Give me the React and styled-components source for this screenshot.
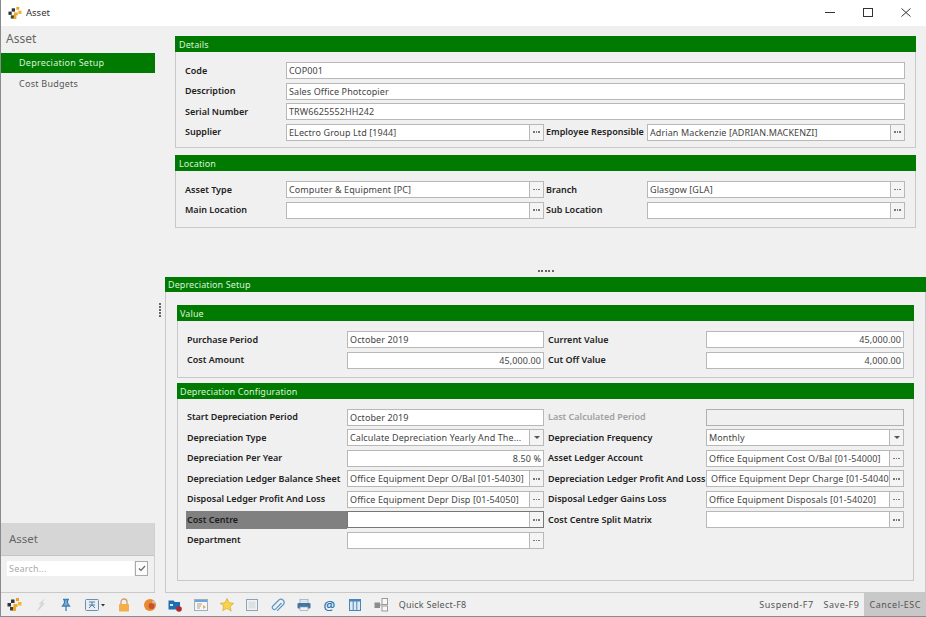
import React from 'react';
import styled, { createGlobalStyle } from 'styled-components';

const Global = createGlobalStyle`
  html, body { margin: 0; padding: 0; background: #f0f0f0; }
  #root { width: 926px; height: 617px; overflow: hidden; }
  * { box-sizing: border-box; }
`;
const FONT = `"Noto Sans", "Open Sans", "Liberation Sans", sans-serif`;
const GREEN = '#017a01';
const GREEN_TEXT = '#d8f3d8';

const Window = styled.div`
  width: 926px; height: 617px; display: flex; flex-direction: column;
  background: #f0f0f0; font-family: ${FONT}; font-size: 9px; color: #333;
  border-left: 1px solid #8a8a8a; border-bottom: 1px solid #8a8a8a;
`;
const TitleBar = styled.div`
  height: 26px; flex: none; background: #fff; display: flex; align-items: center; padding: 0 0 1px 7px;
`;
const TitleText = styled.span`font-size: 9.5px; color: #333; margin-left: 4px; flex: 1;`;
const WinBtn = styled.div`width: 38px; height: 25px; display: flex; align-items: center; justify-content: center;`;
const WinControls = styled.div`display: flex; margin-right: 1px;`;

const Main = styled.div`flex: none; height: 567px; display: flex;`;
const Sidebar = styled.aside`width: 154px; flex: none; display: flex; flex-direction: column; border-bottom: 1px solid #c8c8c8;`;
const SideTitle = styled.div`height: 27px; padding: 5px 0 0 5px; font-size: 12px; line-height: 16px; color: #666;`;
const SideItem = styled.div`
  height: 20px; display: flex; align-items: center; padding: 0 0 2px 18px; font-size: 9px; letter-spacing: .25px;
  margin-bottom: 1px;
  background: ${p => (p.$active ? GREEN : 'transparent')};
  color: ${p => (p.$active ? GREEN_TEXT : '#555')};
`;
const SideSpacer = styled.div`flex: 1;`;
const SideFoot = styled.div`border-right: 1px solid #d0d0d0;`;
const SideFootTitle = styled.div`
  height: 33px; background: #d6d6d6; display: flex; align-items: center; padding: 0 0 1px 8px;
  font-size: 11.5px; color: #666; border-bottom: 1px solid #c4c4c4;
`;
const SearchRow = styled.div`height: 36px; display: flex; align-items: flex-start; padding: 5px 0 0 6px;`;
const SearchInput = styled.div`
  width: 127px; height: 15px; background: #fff; padding-left: 2px; font-size: 9px; line-height: 15px; color: #aaa; letter-spacing: .2px;
`;
const SearchCheck = styled.div`
  width: 13px; height: 15px; margin-left: 1px; background: #fbfbfb; border: 1px solid #aaa;
  display: flex; align-items: center; justify-content: center;
`;
const Splitter = styled.div`
  width: 10px; flex: none; display: flex; flex-direction: column; align-items: center; justify-content: center; gap: 1px;
`;
const Dot = styled.i`display: block; width: 2px; height: 2px; background: #666;`;
const Content = styled.div`flex: 1; min-width: 0; display: flex; flex-direction: column;`;
const TopArea = styled.div`padding: 10px 10px 0 10px; display: flex; flex-direction: column; gap: 7px;`;
const Panel = styled.section`
  border: 1px solid #c8c8c8; border-top: 0;
  margin-top: ${p => p.$mt || 0}px;
`;
const PanelHead = styled.div`
  height: ${p => p.$h || 16}px; margin: 0 -1px; background: ${GREEN}; color: ${GREEN_TEXT};
  display: flex; align-items: center; padding-left: ${p => p.$pad || 4}px; font-size: 9px; letter-spacing: .1px;
`;
const Rows = styled.div`
  display: grid; row-gap: 2.5px; grid-auto-rows: 18px; align-items: center;
  grid-template-columns: ${p => p.$cols};
  padding: ${p => p.$top || 9.5}px 9px ${p => p.$bottom}px 9px;
`;
const Label = styled.div`
  font-size: 9px; font-weight: 600; color: ${p => (p.$off ? '#a0a0a0' : '#222')}; white-space: nowrap; height: 18px; line-height: 18px;
  ${p => p.$hl && `background:#808080; margin-left:-1px; padding-left:1px; color:#1c1c1c;`}
`;
const FieldBox = styled.div`
  height: 17px; display: flex; background: ${p => (p.$off ? '#f0f0f0' : '#fff')};
  border: 1px solid ${p => (p.$focus ? '#777' : p.$off ? '#b0b0b0' : '#b8b8b8')};
  grid-column: ${p => (p.$span ? `span ${p.$span}` : 'auto')};
  min-width: 0;
`;
const FieldText = styled.div`
  flex: 1; min-width: 0; overflow: hidden; white-space: nowrap; line-height: 15px; padding: 0 0 0 ${p => p.$indent || 2}px;
  padding-right: ${p => (p.$right ? 2 : 0)}px;
  font-size: 9px; color: #444; letter-spacing: .1px; text-align: ${p => (p.$right ? 'right' : 'left')};
`;
const FieldBtn = styled.div`
  width: 14px; flex: none; border-left: 1px solid #b8b8b8; background: #f4f4f4; display: flex; align-items: center; justify-content: center; gap: 1px;
`;
const BtnDot = styled.i`display: block; width: 1.5px; height: 1.5px; background: #777;`;
const Split = styled.div`flex: 1; display: flex; align-items: flex-end; justify-content: center; padding-bottom: 5px; min-height: 49px; gap: 1.5px;`;
const Frame = styled.div`
  flex: none; border-left: 1px solid #c8c8c8; border-right: 1px solid #c8c8c8; border-bottom: 1px solid #c8c8c8;
  height: 316px;
`;
const Inner = styled.div`padding: 13px 11px 0 11px;`;
const Toolbar = styled.div`flex: 1; display: flex; align-items: center; padding: 0 0 0 1px; min-height: 0;`;
const ToolSlot = styled.div`width: ${p => p.$w || 25.7}px; flex: none; height: 20px; display: flex; align-items: center; justify-content: center;`;
const ToolText = styled.div`font-size: 9px; color: #555; letter-spacing: .25px; padding: 0 5px; white-space: nowrap;`;
const ToolRight = styled.div`margin-left: auto; display: flex; align-items: stretch; height: 100%;`;
const ToolBtn = styled.div`
  display: flex; align-items: center; padding: 0 ${p => p.$pad || 5}px; font-size: 9px; color: #555; letter-spacing: .5px;
  background: ${p => (p.$active ? '#c8c8c8' : 'transparent')};
`;
const AtGlyph = styled.span`color: #2a78b5; font-size: 13px; font-weight: 600; line-height: 16px;`;

const Logo = ({ s = 15 }) => (
  <svg width={s} height={s} viewBox="0 0 15 15">
    <rect x="0.500" y="6" width="3.500" height="3.500" fill="#333" />
    <rect x="4" y="2.500" width="3.500" height="3.500" fill="#333" />
    <rect x="3" y="10" width="3.500" height="3.500" fill="#444" />
    <rect x="9" y="1" width="3" height="3" fill="#f0a020" />
    <rect x="11" y="5" width="3.500" height="3.500" fill="#f5b32e" />
    <path d="M6.500 7h4v3h-1.500v4H6z" fill="#f0a828" />
  </svg>
);
const I = ({ children }) => <svg width="16" height="16" viewBox="0 0 16 16">{children}</svg>;
const Icons = [
  <Logo key="l" />,
  <I key="b"><path d="M12 1.500 5.500 7H8l-4.500 7.500L7 12l5-6H9.500z" fill="#d6d6d6" /></I>,
  <I key="p"><path d="M5 2.500h6M6.500 2.500V6L4.500 9h7l-2-3V2.500M8 9v5" stroke="#3f7fb5" strokeWidth="1.300" fill="#7fb0d6" /></I>,
  null,
  <I key="lk"><rect x="3" y="7" width="10" height="7.500" rx="1" fill="#f4ad48" /><path d="M5 7V5a3 3 0 0 1 6 0v2" stroke="#c9a070" strokeWidth="1.300" fill="none" /></I>,
  <I key="o"><circle cx="8" cy="8" r="6" fill="#ea8a2e" /><circle cx="9.500" cy="9" r="3" fill="#c8502a" /><circle cx="11.500" cy="5" r="1.500" fill="#b9c4d6" /></I>,
  <I key="f"><path d="M1.500 3.500h5L8 5h5v7.500H1.500z" fill="#1f6fb0" /><circle cx="12" cy="12" r="2.800" fill="#b5262b" /><rect x="3" y="7" width="3" height="2" fill="#d8e8f5" /></I>,
  <I key="w"><rect x="1.500" y="2.500" width="13" height="11" fill="#f6f6f6" stroke="#9ab0c4" /><rect x="2" y="3" width="12" height="2" fill="#6ba6d6" /><path d="M4 7h5M4 9h4M4 11h3" stroke="#b8a47e" /><path d="m10 8 3 2-3 2z" fill="#e5b050" /></I>,
  <I key="s"><path d="m8 1.500 2 4.300 4.700.5-3.500 3.200 1 4.600L8 11.300 3.800 13.600l1-4.600L1.300 6.300 6 5.800z" fill="#f9d34a" stroke="#d9a826" strokeWidth=".7" /></I>,
  <I key="sq"><rect x="2.500" y="2.500" width="11" height="11" fill="#f0f2f4" stroke="#8da3b5" /><rect x="4.500" y="4.500" width="7" height="7" fill="#dcdfe4" /></I>,
  <I key="c"><path d="M12.500 6 6.800 11.800a2 2 0 0 1-2.900-2.800l6-6a3.200 3.200 0 0 1 4.500 4.500l-6.300 6.300" transform="translate(-1 0)" fill="none" stroke="#5c98cb" strokeWidth="1.200" /></I>,
  <I key="pr"><rect x="4" y="2.500" width="8" height="4" fill="#dfe6ec" stroke="#8a9aa8" strokeWidth=".6" /><rect x="1.500" y="6" width="13" height="5.500" rx="1" fill="#3f76a6" /><rect x="4" y="10" width="8" height="3.500" fill="#eef1f3" stroke="#8a9aa8" strokeWidth=".6" /></I>,
  <AtGlyph key="at">@</AtGlyph>,
  <I key="col"><rect x="2.500" y="2.500" width="11" height="11" fill="#dfeaf3" stroke="#4a85b8" /><rect x="2.500" y="2.500" width="11" height="2" fill="#4a85b8" /><path d="M6.200 3v10M9.800 3v10" stroke="#4a85b8" /></I>,
  <I key="bx"><rect x="9" y="1.500" width="5.500" height="6" fill="#f8f8f8" stroke="#999" /><rect x="1.500" y="5.500" width="5.500" height="5.500" fill="#8c8c8c" /><rect x="9" y="9" width="5.500" height="5" fill="#f8f8f8" stroke="#999" /><path d="M7 8h2" stroke="#999" /></I>,
];
const ColumnsIcon = () => (
  <svg width="26" height="16" viewBox="0 0 26 16">
    <rect x="3.500" y="2.500" width="13" height="11" rx="1" fill="#e8edf2" stroke="#6f8eaa" />
    <path d="M7 5h6M10 5v3M7 8h6M7 11l3-3 3 3" stroke="#4b7fa9" fill="none" />
    <path d="m19 7 4 0-2 2.500z" fill="#333" />
  </svg>
);

const Field = ({ v, btn, sel, right, off, focus, span, indent }) => (
  <FieldBox $off={off} $focus={focus} $span={span}>
    <FieldText $right={right} $indent={indent}>{v}</FieldText>
    {btn && <FieldBtn><BtnDot /><BtnDot /><BtnDot /></FieldBtn>}
    {sel && (
      <FieldBtn>
        <svg width="6" height="3" viewBox="0 0 6 3"><path d="M0 0h6L3 3z" fill="#555" /></svg>
      </FieldBtn>
    )}
  </FieldBox>
);

const DETAILS = '101px 258px 2px 101px 258px';
const DEP = '160px 197px 4px 158px 198px';
const Gap = styled.div``;

const Pair = ({ l1, f1, l2, f2, hl, off2 }) => (
  <>
    <Label $hl={hl}>{l1}</Label>
    <Field {...f1} />
    <Gap />
    <Label $off={off2}>{l2}</Label>
    <Field {...f2} />
  </>
);

export default function App() {
  return (
    <Window>
      <Global />
      <TitleBar>
        <Logo s={14} />
        <TitleText>Asset</TitleText>
        <WinControls>
          <WinBtn><svg width="10" height="9" viewBox="0 0 10 9"><path d="M0 4.500h10" stroke="#333" /></svg></WinBtn>
          <WinBtn><svg width="10" height="9" viewBox="0 0 10 9"><rect x=".5" y=".5" width="9" height="8" fill="none" stroke="#333" /></svg></WinBtn>
          <WinBtn><svg width="10" height="9" viewBox="0 0 10 9"><path d="m.5.5 9 8m0-8-9 8" stroke="#333" /></svg></WinBtn>
        </WinControls>
      </TitleBar>
      <Main>
        <Sidebar>
          <SideTitle>Asset</SideTitle>
          <SideItem $active>Depreciation Setup</SideItem>
          <SideItem>Cost Budgets</SideItem>
          <SideSpacer />
          <SideFoot>
            <SideFootTitle>Asset</SideFootTitle>
            <SearchRow>
              <SearchInput>Search...</SearchInput>
              <SearchCheck>
                <svg width="8" height="7" viewBox="0 0 8 7"><path d="m1 3.500 2 2 4-4.500" stroke="#666" strokeWidth="1.200" fill="none" /></svg>
              </SearchCheck>
            </SearchRow>
          </SideFoot>
        </Sidebar>
        <Splitter><Dot /><Dot /><Dot /><Dot /><Dot /></Splitter>
        <Content>
          <TopArea>
            <Panel>
              <PanelHead>Details</PanelHead>
              <Rows $cols={DETAILS} $bottom={6}>
                <Label>Code</Label><Field v="COP001" span={4} />
                <Label>Description</Label><Field v="Sales Office Photcopier" span={4} />
                <Label>Serial Number</Label><Field v="TRW6625552HH242" span={4} />
                <Pair l1="Supplier" f1={{ v: 'ELectro Group Ltd [1944]', btn: true }} l2="Employee Responsible" f2={{ v: 'Adrian Mackenzie [ADRIAN.MACKENZI]', btn: true }} />
              </Rows>
            </Panel>
            <Panel>
              <PanelHead>Location</PanelHead>
              <Rows $cols={DETAILS} $bottom={8}>
                <Pair l1="Asset Type" f1={{ v: 'Computer & Equipment [PC]', btn: true }} l2="Branch" f2={{ v: 'Glasgow [GLA]', btn: true }} />
                <Pair l1="Main Location" f1={{ v: '', btn: true }} l2="Sub Location" f2={{ v: '', btn: true }} />
              </Rows>
            </Panel>
          </TopArea>
          <Split><Dot /><Dot /><Dot /><Dot /><Dot /></Split>
          <Frame>
            <PanelHead $pad={3} $h={15}>Depreciation Setup</PanelHead>
            <Inner>
              <Panel>
                <PanelHead $pad={3}>Value</PanelHead>
                <Rows $cols={DEP} $bottom={8}>
                  <Pair l1="Purchase Period" f1={{ v: 'October 2019' }} l2="Current Value" f2={{ v: '45,000.00', right: true }} />
                  <Pair l1="Cost Amount" f1={{ v: '45,000.00', right: true }} l2="Cut Off Value" f2={{ v: '4,000.00', right: true }} />
                </Rows>
              </Panel>
              <Panel $mt={5}>
                <PanelHead $pad={3}>Depreciation Configuration</PanelHead>
                <Rows $cols={DEP} $top={9.4} $bottom={30.6}>
                  <Pair l1="Start Depreciation Period" f1={{ v: 'October 2019' }} l2="Last Calculated Period" off2 f2={{ v: '', off: true }} />
                  <Pair l1="Depreciation Type" f1={{ v: 'Calculate Depreciation Yearly And The...', sel: true }} l2="Depreciation Frequency" f2={{ v: 'Monthly', sel: true }} />
                  <Pair l1="Depreciation Per Year" f1={{ v: '8.50 %', right: true }} l2="Asset Ledger Account" f2={{ v: 'Office Equipment Cost O/Bal [01-54000]', btn: true }} />
                  <Pair l1="Depreciation Ledger Balance Sheet" f1={{ v: 'Office Equipment Depr O/Bal [01-54030]', btn: true }} l2="Depreciation Ledger Profit And Loss" f2={{ v: 'Office Equipment Depr Charge [01-54040]', btn: true, indent: 4 }} />
                  <Pair l1="Disposal Ledger Profit And Loss" f1={{ v: 'Office Equipment Depr Disp [01-54050]', btn: true }} l2="Disposal Ledger Gains Loss" f2={{ v: 'Office Equipment Disposals [01-54020]', btn: true }} />
                  <Pair hl l1="Cost Centre" f1={{ v: '', btn: true, focus: true }} l2="Cost Centre Split Matrix" f2={{ v: '', btn: true }} />
                  <Label>Department</Label><Field v="" btn />
                </Rows>
              </Panel>
            </Inner>
          </Frame>
        </Content>
      </Main>
      <Toolbar>
        {Icons.map((ic, i) => (
          ic ? <ToolSlot key={i}>{ic}</ToolSlot> : <ToolSlot key={i} $w={32}><ColumnsIcon /></ToolSlot>
        ))}
        <ToolText>Quick Select-F8</ToolText>
        <ToolRight>
          <ToolBtn $pad={5}>Suspend-F7</ToolBtn>
          <ToolBtn>Save-F9</ToolBtn>
          <ToolBtn $active $pad={5}>Cancel-ESC</ToolBtn>
        </ToolRight>
      </Toolbar>
    </Window>
  );
}
